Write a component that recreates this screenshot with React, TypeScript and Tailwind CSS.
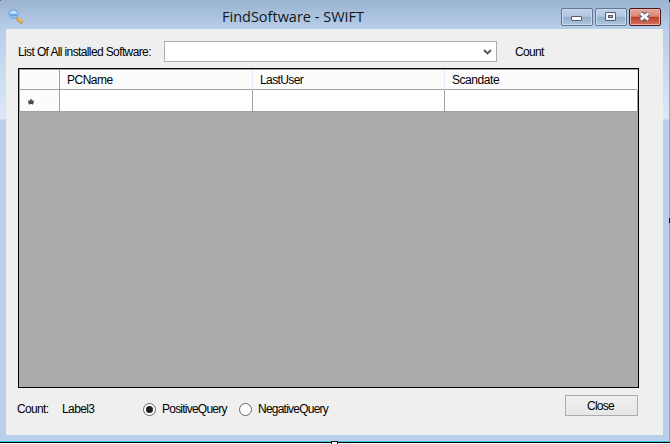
import type { ReactNode } from 'react';

function TitleBar() {
  return (
    <header className="flex h-[29px] items-start bg-linear-to-b from-[#9ab3d0] to-[#b7cfe9] pl-2">
      <svg className="mt-[9px] shrink-0" width="16" height="16" viewBox="0 0 16 16">
        <path d="M9.8 9.8 13.4 13" stroke="#c98a35" strokeWidth="3.2" strokeLinecap="round" />
        <path d="M10.2 9.5 13.3 12.3" stroke="#f8cf58" strokeWidth="1.6" strokeLinecap="round" />
        <circle cx="5.5" cy="5" r="4.7" fill="#86bff5" stroke="#8aa5cd" />
        <path d="M2 4.5a3.7 3.4 0 0 1 7 0z" fill="#d5ebff" />
        <path d="M2 6h7" stroke="#559eea" strokeWidth="1.5" />
      </svg>
      <h1 className="ml-[198px] mt-[7px] w-[339px] whitespace-nowrap font-['Open_Sans',sans-serif] text-[14.5px] leading-5 text-[#111820]">
        FindSoftware - SWIFT
      </h1>
      <div className="mt-2 flex gap-0.5">
        <CaptionButton label="Minimize">
          <rect x="10.5" y="8.5" width="10" height="4" rx="0.5" fill="#fafafa" stroke="#535c70" />
        </CaptionButton>
        <CaptionButton label="Maximize">
          <rect x="10.5" y="4.5" width="10" height="8" rx="0.5" fill="#f5f6f7" stroke="#535c70" />
          <rect x="13.5" y="7.5" width="4" height="2" fill="#8eb1d5" stroke="#535c70" />
        </CaptionButton>
        <CaptionButton label="Close window" danger>
          <path d="m11.8 5.3 7.4 6.4m0-6.4-7.4 6.4" stroke="#55505f" strokeWidth="5" />
          <path d="m11.8 5.3 7.4 6.4m0-6.4-7.4 6.4" stroke="#f5f5f5" strokeWidth="3" />
        </CaptionButton>
      </div>
    </header>
  );
}

function CaptionButton({ label, danger, children }: { label: string; danger?: boolean; children: ReactNode }) {
  return (
    <button
      aria-label={label}
      className={`h-[18px] w-8 rounded-[2px] border ${
        danger
          ? 'border-[#4b1420] bg-[linear-gradient(#e7a59b_0%,#d98676_46%,#bd3d25_50%,#cf7561_100%)] shadow-[inset_0_0_0_1px_#e8b4aa]'
          : 'border-[#63758f] bg-[linear-gradient(#bdd1e8_0%,#b1c8e2_46%,#93aecb_50%,#afc7df_100%)] shadow-[inset_0_0_0_1px_#cadbed]'
      }`}
    >
      <svg className="-ml-px -mt-px block" width="32" height="18" viewBox="0 0 32 18" fill="none">
        {children}
      </svg>
    </button>
  );
}

function DataGrid() {
  return (
    <div className="ml-3 mt-[6px] h-[320px] w-[621px] border border-black bg-[#ababab]">
      <div className="border-l border-t border-[#a0a0a0]">
        <div className="grid h-5 grid-cols-[40px_193px_192px_193px] border-b border-[#a0a0a0] bg-[#fcfcfc] leading-[21px]">
          <span className="border-r border-[#a0a0a0]" />
          <span className="border-r border-[#e3edf9] pl-[7px] tracking-[-0.5px]">PCName</span>
          <span className="border-r border-[#e3edf9] pl-[7px] tracking-[-0.6px]">LastUser</span>
          <span className="border-r border-[#e3edf9] pl-[7px] tracking-[-0.45px]">Scandate</span>
        </div>
        <div className="grid h-[22px] grid-cols-[40px_193px_192px_193px] border-b border-[#a0a0a0] bg-white">
          <span className="flex items-center border-r border-[#a0a0a0] bg-[#fcfcfc] pl-2">
            <svg className="mt-0.5" width="6" height="6" viewBox="0 0 6 6">
              <path d="M3 0v5M.3 2l5.4 1.5M5.7 2 .3 3.5M1 5.3 3 3l2 2.3" stroke="#4a4a4a" strokeWidth="1.4" fill="none" />
            </svg>
          </span>
          <span className="border-r border-[#a0a0a0]" />
          <span className="border-r border-[#a0a0a0]" />
          <span className="border-r border-[#a0a0a0]" />
        </div>
      </div>
    </div>
  );
}

function Radio({ checked }: { checked?: boolean }) {
  return (
    <svg className="shrink-0" width="13" height="13" viewBox="0 0 13 13">
      <circle cx="6.5" cy="6.5" r="6" fill="white" stroke="#666" />
      {checked && <circle cx="6.5" cy="6.5" r="3.5" fill="#202020" />}
    </svg>
  );
}

export default function App() {
  return (
    <div className="relative h-[444px] w-[670px] overflow-hidden bg-[#b9d0ea] font-['Liberation_Sans',Arial,sans-serif] text-[12px] text-black">
      <div className="flex h-[441px] w-[669px] flex-col">
        <TitleBar />
        <div className="h-[406px] bg-[linear-gradient(#b7cfe9_0px,#dbe8f6_86px,#dbe8f6_90px,#b9d0ea_91px)] px-1.5">
          <main className="h-[406px] bg-[#efefef] pt-3">
            <div className="flex h-[21px] items-center whitespace-nowrap pl-3">
              <label className="w-[146px] tracking-[-0.62px]">List Of All installed Software:</label>
              <div className="flex h-[21px] w-[333px] items-center justify-end border border-[#abadb3] bg-white pr-1">
                <svg width="9" height="6" viewBox="0 0 9 6">
                  <path d="m1 1 3.5 3.5L8 1" stroke="#555" strokeWidth="1.9" fill="none" />
                </svg>
              </div>
              <span className="ml-[18px] tracking-[-0.7px]">Count</span>
            </div>
            <DataGrid />
            <div className="flex h-[42px] items-center whitespace-nowrap pl-[11px]">
              <span className="w-[45px] tracking-[-0.65px]">Count:</span>
              <span className="w-[81px] tracking-[-0.6px]">Label3</span>
              <Radio checked />
              <span className="ml-1.5 w-[77px] tracking-[-0.77px]">PositiveQuery</span>
              <Radio />
              <span className="ml-1.5 tracking-[-0.77px]">NegativeQuery</span>
              <button className="mb-[7px] ml-auto mr-[25px] h-[21px] w-[73px] border border-[#acacac] bg-linear-to-b from-[#f0f0f0] to-[#e6e6e6] pr-0.5 tracking-[-0.75px]">
                Close
              </button>
            </div>
          </main>
        </div>
      </div>
      <div className="absolute right-0 top-0 h-[442px] w-px bg-[#4fc4e8]" />
      <div className="absolute right-0 top-0 h-0.5 w-px bg-black" />
      <div className="absolute left-0 top-0 size-px bg-[#5c6470]" />
      <div className="absolute left-0 top-[441px] h-px w-[670px] bg-[#3fc4e4]" />
      <div className="absolute left-0 top-[442px] h-px w-[670px] bg-black" />
      <div className="absolute left-0 top-[443px] h-px w-[670px] bg-white" />
      <div className="absolute left-[331px] top-[441px] h-[5px] w-[7px] border border-black bg-white" />
      <div className="absolute left-[669px] top-[218px] h-[5px] w-px bg-black" />
    </div>
  );
}
